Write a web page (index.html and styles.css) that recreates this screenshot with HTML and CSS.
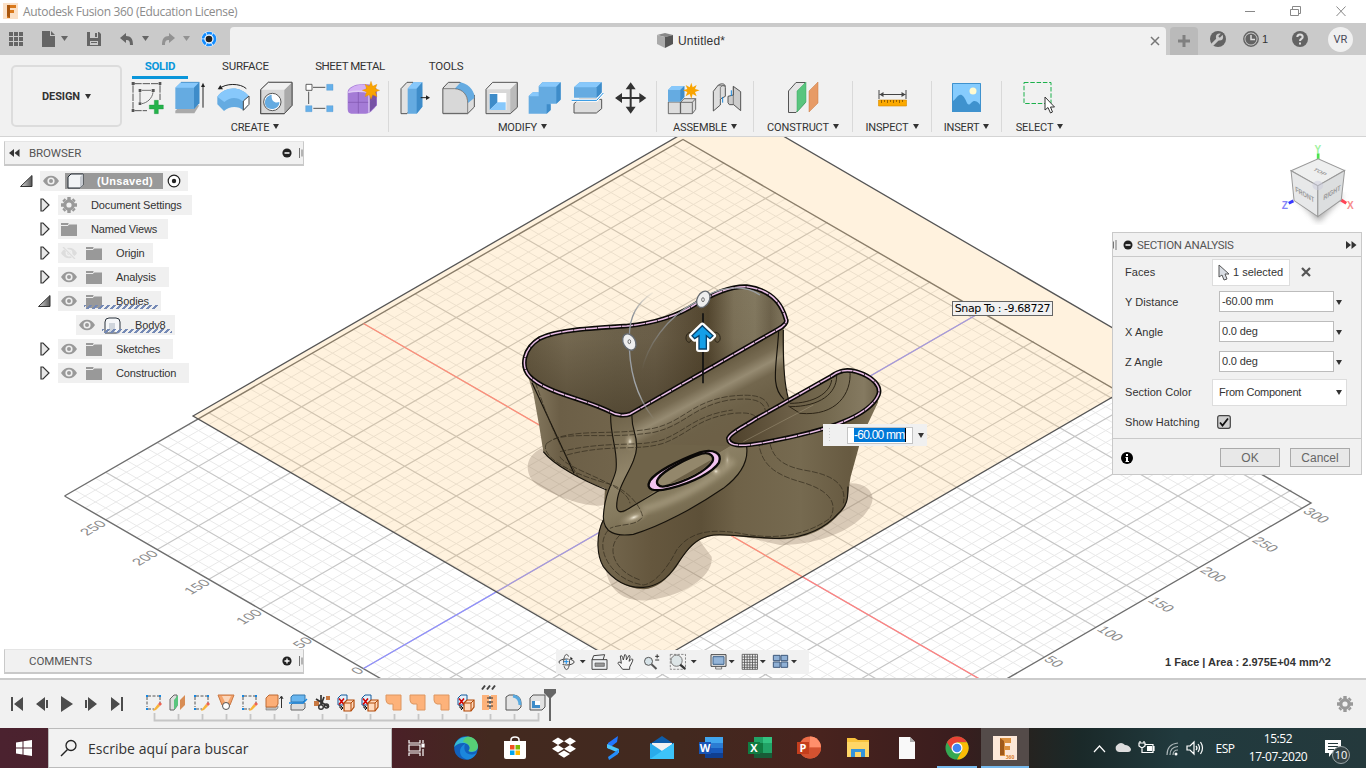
FILE: index.html
```html
<!DOCTYPE html>
<html lang="es">
<head>
<meta charset="utf-8">
<title>Autodesk Fusion 360</title>
<link rel="stylesheet" href="styles.css">
</head>
<body>
<svg class="defs" width="0" height="0">
  <defs>
    <symbol id="eye" viewBox="0 0 16 12"><path d="M0 6C4-1 12-1 16 6C12 13 4 13 0 6Z" fill="#999"/><circle cx="8" cy="6" r="3.6" fill="#f0f0f0"/><circle cx="8" cy="6" r="2" fill="#999"/></symbol>
    <symbol id="eyeoff" viewBox="0 0 16 12"><path d="M0 6C4-1 12-1 16 6C12 13 4 13 0 6Z" fill="#ddd"/><circle cx="8" cy="6" r="3.4" fill="#f0f0f0"/><circle cx="8" cy="6" r="2" fill="#ddd"/><path d="M3 0L14 12" stroke="#f0f0f0" stroke-width="3"/><path d="M2 0L14 12" stroke="#ddd" stroke-width="1.3"/></symbol>
    <symbol id="folder" viewBox="0 0 16 13"><path d="M0 0H7L8 1H16V13H0Z" fill="#999"/><path d="M0 2.5H7L8 1H16" stroke="#eee" fill="none"/></symbol>
    <symbol id="gear" viewBox="-8 -8 16 16"><circle r="4.2" fill="none" stroke="#999" stroke-width="3.2"/><path d="M0-8V-5M0 8V5M-8 0H-5M8 0H5M-5.5-5.5L-4-4M5.5 5.5L4 4M5.5-5.5L4-4M-5.5 5.5L-4 4" stroke="#999" stroke-width="3.4"/></symbol>
    <symbol id="closed" viewBox="0 0 10 14"><path d="M1 1H3L9 7L3 13H1Z" fill="#e8e8e8" stroke="#333" stroke-width="1.2"/></symbol>
    <symbol id="open" viewBox="0 0 13 12"><path d="M12 .5V11.500H.5Z" fill="url(#tri)" stroke="#333"/></symbol>
    <symbol id="tsketch" viewBox="0 0 18 18"><path d="M3 2H14M2 3V13M3 15H9M15 3V9" stroke="#555" stroke-dasharray="3 1.500"/><path d="M1 1H3V3H1ZM14 1H16V3H14ZM1 14H3V16H1Z" fill="#1787e0"/><path d="M9 15L13 10L15 12L11 16L8 17Z" fill="#f8b43a"/><path d="M13 10L15 8L17 10L15 12Z" fill="#ee6352"/></symbol>
    <symbol id="tcopy" viewBox="0 0 18 18"><path d="M1 4L4 1H10V8L7 11H1Z" fill="#e3f0fb" stroke="#145a9c"/><path d="M2 4.500L7 10.500M7 4.500L2 10.500" stroke="#d20000" stroke-width="1.600"/><path d="M7 9L10 6H17V13L14 17H7Z" fill="#ffd9bd" stroke="#b24b0a" stroke-width="1.200"/><path d="M7 9H14V17M14 9L17 6" stroke="#b24b0a" fill="none"/><path d="M3 11V14H6M4 12L6 14L4 16" stroke="#111" fill="none"/></symbol>
    <symbol id="tpatch" viewBox="0 0 18 18"><path d="M1 1H16V16H8V10H4Q1 9 1 6Z" fill="#fdb27a" stroke="#dd9660"/></symbol>
    <symbol id="tconstruct" viewBox="0 0 18 18"><path d="M1 5L5 1H8V12L5 16H1Z" fill="#ddd" stroke="#666"/><path d="M5 6L9 1V11L5 16Z" fill="#59c57e"/><path d="M11 6L16 1V11L11 16Z" fill="#d88d55"/></symbol>
    <linearGradient id="tri"><stop stop-color="#ddd"/><stop offset="1" stop-color="#555"/></linearGradient>
    <linearGradient id="cupin" x1="0" y1="0" x2="1" y2="0"><stop stop-color="#665a42"/><stop offset=".16" stop-color="#776b53"/><stop offset=".35" stop-color="#6e634c"/><stop offset=".5" stop-color="#6c604a"/><stop offset=".7" stop-color="#53462f"/><stop offset=".8" stop-color="#7d7259"/><stop offset=".88" stop-color="#837960"/><stop offset=".94" stop-color="#6e634c"/><stop offset="1" stop-color="#857b62"/></linearGradient>
    <linearGradient id="cupshade" x1="0" y1="0" x2="0" y2="1"><stop stop-color="#3a2f1c" stop-opacity="0"/><stop offset=".4" stop-color="#3a2f1c" stop-opacity=".05"/><stop offset="1" stop-color="#3a2f1c" stop-opacity=".5"/></linearGradient>
    <linearGradient id="wall" x1="0" y1="0" x2="1" y2="0"><stop stop-color="#8c8066"/><stop offset=".1" stop-color="#6c5f47"/><stop offset=".25" stop-color="#71644b"/><stop offset=".36" stop-color="#65573e"/><stop offset=".5" stop-color="#5d5038"/><stop offset=".6" stop-color="#6f6248"/><stop offset=".78" stop-color="#766a50"/><stop offset=".92" stop-color="#675a41"/><stop offset="1" stop-color="#7f7358"/></linearGradient>
    <linearGradient id="deck" gradientUnits="userSpaceOnUse" x1="560" y1="310" x2="650" y2="480"><stop stop-color="#64583f"/><stop offset=".22" stop-color="#776b52"/><stop offset=".38" stop-color="#968b72"/><stop offset=".55" stop-color="#73674e"/><stop offset=".8" stop-color="#6d6148"/><stop offset="1" stop-color="#6d6047"/></linearGradient>
    <linearGradient id="ledge" x1="0" y1="0" x2=".5" y2="1"><stop stop-color="#6c6047"/><stop offset=".45" stop-color="#91856a"/><stop offset=".7" stop-color="#857a5e"/><stop offset="1" stop-color="#6c6046"/></linearGradient>
    <radialGradient id="glow"><stop stop-color="#f1ead8"/><stop offset=".3" stop-color="#b9ad92" stop-opacity=".7"/><stop offset="1" stop-color="#8a7d62" stop-opacity="0"/></radialGradient>
    <linearGradient id="cup2" x1="0" y1="0" x2="1" y2="0"><stop stop-color="#4e412b"/><stop offset=".4" stop-color="#6b5e46"/><stop offset=".65" stop-color="#74694f"/><stop offset=".9" stop-color="#857a61"/><stop offset="1" stop-color="#6e634b"/></linearGradient>
    <linearGradient id="arc1" gradientUnits="userSpaceOnUse" x1="0" y1="60" x2="0" y2="450"><stop stop-color="#8b9198" stop-opacity="0"/><stop offset=".2" stop-color="#8b9198"/><stop offset=".8" stop-color="#a4a8ac"/><stop offset="1" stop-color="#a4a8ac" stop-opacity="0"/></linearGradient>
    <linearGradient id="arc2" gradientUnits="userSpaceOnUse" x1="395" y1="300" x2="520" y2="120"><stop stop-color="#8b9198" stop-opacity="0"/><stop offset="1" stop-color="#9a9fa4"/></linearGradient>
    <filter id="soft3"><feGaussianBlur stdDeviation="8"/></filter>
  </defs>
</svg>

<header class="titlebar">
  <svg width="17" height="17" viewBox="0 0 17 17"><rect x="1" width="15" height="16" fill="#fbe0c6"/><path d="M5 2H14V5H8V7H12V10H8V15H5Z" fill="#d9791d"/><path d="M5 2H8V15L5 13Z" fill="#a9560d"/></svg>
  <span class="apptitle">Autodesk Fusion 360 (Education License)</span>
  <svg class="winbtns" width="120" height="22" viewBox="1240 0 120 22" fill="none" stroke="#888"><path d="M1245 10.500H1255M1290.500 8.500H1298.500V14.500H1290.500ZM1292.500 8V5.500H1300.500V12.500H1299M1336.500 5.500L1345.500 15M1345.500 5.500L1336.500 15"/></svg>
</header>

<div class="tabbar">
  <svg class="quick" width="230" height="32" viewBox="0 23 230 32">
    <path d="M9 32h4v4h-4zM14 32h4v4h-4zM19 32h4v4h-4zM9 37h4v4h-4zM14 37h4v4h-4zM19 37h4v4h-4zM9 42h4v4h-4zM14 42h4v4h-4zM19 42h4v4h-4z" fill="#656565"/>
    <path d="M42 31H50V36H55V47H42ZM51 31L55 35H51Z" fill="#656565"/><path d="M61 36H68L64.500 41Z" fill="#656565"/>
    <path d="M87 32H99L101 34V46H87Z" fill="#656565"/><path d="M90 32H98V38H90ZM90 41H98V45H90Z" fill="#cacaca"/><path d="M95 33H97V37H95ZM91 42H97V43H91Z" fill="#656565"/>
    <path d="M120 38L126 33V36C131 36 133 39 133 45H130C130 41 129 40 126 40V43Z" fill="#656565"/><path d="M142 36H149L145.500 41Z" fill="#656565"/>
    <path d="M175 38L169 33V36C164 36 162 39 162 45H165C165 41 166 40 169 40V43Z" fill="#929292"/><path d="M183 36H190L186.500 41Z" fill="#929292"/>
    <circle cx="209" cy="39" r="7.700" fill="#eaf5ff"/><circle cx="209" cy="39" r="6" fill="none" stroke="#138cff" stroke-width="2.600" stroke-dasharray="5.500 .8"/><circle cx="209" cy="39" r="3.300" fill="#222"/>
  </svg>
  <div class="doctab">
    <svg width="17" height="16" viewBox="0 0 17 16"><path d="M0 2L8 0L16 2L8 4Z" fill="#888"/><path d="M0 2L8 4V15L0 11Z" fill="#aaa"/><path d="M8 4L16 2V11L8 15Z" fill="#555"/></svg>
    <span>Untitled*</span>
    <svg class="tabx" width="10" height="10" viewBox="0 0 10 10"><path d="M1 1L9 9M9 1L1 9" stroke="#777" stroke-width="1.500"/></svg>
  </div>
  <div class="newtab"><svg width="14" height="14" viewBox="0 0 14 14"><path d="M7 1V13M1 7H13" stroke="#808080" stroke-width="3"/></svg></div>
  <svg width="56" height="32" viewBox="1204 23 56 32"><circle cx="1218" cy="39" r="8" fill="#636363"/><path d="M1213 44L1218 39" stroke="#cacaca" stroke-width="3" stroke-linecap="round"/><circle cx="1219.500" cy="37" r="3.600" fill="#cacaca"/><path d="M1219 37L1223 33" stroke="#636363" stroke-width="2.200"/><circle cx="1251" cy="39" r="7.200" fill="none" stroke="#636363" stroke-width="1.400"/><circle cx="1251" cy="39" r="5.600" fill="#636363"/><path d="M1251 35V39.500H1255" stroke="#ddd" stroke-width="1.500" fill="none"/></svg>
  <span class="jobs">1</span>
  <svg class="help" width="18" height="18" viewBox="0 0 18 18"><circle cx="9" cy="9" r="8" fill="#636363"/><path d="M6.300 7C6.300 3.500 11.700 3.500 11.700 7C11.700 9 9 8.800 9 11" fill="none" stroke="#ddd" stroke-width="2"/><path d="M8 12.500H10V14.500H8Z" fill="#ddd"/></svg>
  <span class="avatar">VR</span>
</div>

<section class="ribbon">
  <div class="workspace">DESIGN<i class="dn"></i></div>
  <div class="ribbonmain">
    <nav class="rtabs"><span class="on">SOLID</span><span>SURFACE</span><span>SHEET METAL</span><span>TOOLS</span></nav>
    <div class="groups">
      <div class="group create"><div class="icons">
        <svg viewBox="377 240 129 108"><path d="M402 251H478M398 256V326M402 332H440M479 256V300" stroke="#555" stroke-width="3" stroke-dasharray="22 3" fill="none"/><path d="M394 246h9v9h-9zM475 246h8v9h-8zM394 327h8v9h-8zM415 267h8v9h-8zM454 267h9v9h-9zM415 307h8v8h-8z" fill="#555"/><path d="M424 271H452M419 277V306M458 277C456 295 440 309 424 311" stroke="#555" stroke-width="2.500" fill="none"/><path d="M462 301H474V315H489V327H474V341H462V327H447V315H462Z" fill="#25b34b" stroke="#0d8a35"/></svg>
        <svg viewBox="506 240 129 108"><path d="M525 332L542 316H597L582 340H525Z" fill="#aaa"/><path d="M525 263L542 247H597V308L581 327H525Z" fill="#65abe1"/><path d="M525 263L542 247H597L581 263Z" fill="#87c8fb"/><path d="M581 263L597 247V310L581 327Z" fill="#3e8cc9"/><path d="M542 247H597" stroke="#2f7bb8" stroke-width="2"/><path d="M608 323V256" stroke="#222" stroke-width="3"/><path d="M602 261L608 248L614 261Z" fill="#222"/></svg>
        <svg viewBox="635 240 129 108"><path d="M656 267C675 249 720 249 738 266" fill="none" stroke="#222" stroke-width="3"/><path d="M652 268L660 255L668 268Z" fill="#222"/><path d="M651 290C675 258 720 258 746 289L746 314L729 331C714 317 688 317 671 333L651 313Z" fill="#65abe1"/><path d="M651 290C675 258 720 258 746 289L728 304C710 290 690 290 672 306Z" fill="#87c8fb"/><path d="M729 303L746 288V313L729 331Z" fill="#fff" stroke="#444" stroke-width="3"/></svg>
        <svg viewBox="764 240 129 108"><path d="M781 269L804 247H875V316L852 341H781Z" fill="#d8d8d8" stroke="#555" stroke-width="3"/><path d="M852 269L875 247V316L852 341Z" fill="#aaa"/><path d="M781 269L804 247H875L852 269Z" fill="#f0f0f0"/><path d="M781 269L804 247H875V316L852 341H781Z" fill="none" stroke="#555" stroke-width="3"/><circle cx="816" cy="306" r="26" fill="#fff" stroke="#555" stroke-width="3"/><path d="M814 284C812 305 825 310 837 306C838 330 805 333 796 318C790 300 798 288 814 284Z" fill="#65abe1"/></svg>
        <svg viewBox="887 240 129 108"><path d="M932 262H969M919 275V312M933 325H969" stroke="#555" stroke-width="3"/><path d="M911 253h18v18h-18z" fill="#fff" stroke="#444" stroke-width="2.500"/><path d="M973 253h19v18h-19zM910 317h19v18h-19zM973 317h19v18h-19z" fill="#65b0ea" stroke="#4b90c8"/></svg>
        <svg viewBox="1018 240 129 108"><path d="M1038 275C1040 262 1062 252 1080 253C1110 249 1127 264 1126 285V315C1114 330 1104 342 1090 341H1054C1038 341 1038 333 1038 320Z" fill="#a47bd6"/><path d="M1040 275C1045 260 1070 252 1098 254L1088 276C1070 272 1054 274 1040 278Z" fill="#d3b0f4"/><path d="M1102 274L1124 264V316L1102 338Z" fill="#7652a4"/><path d="M1039 307H1102L1126 290M1070 276V340" fill="none" stroke="#7d55ad" stroke-width="2"/><path d="M1040 277Q1070 270 1102 278V338" fill="none" stroke="#dfccf5" stroke-width="4"/><path d="M1108 244L1113 259L1126 253L1121 266L1134 271L1121 276L1126 290L1113 284L1108 298L1103 284L1090 290L1095 276L1082 271L1095 266L1090 253L1103 259Z" fill="#f9a400" stroke="#e38d00"/></svg>
      </div><span class="glabel">CREATE<i class="dn"></i></span></div>
      <div class="group modify"><div class="icons">
        <svg viewBox="13 180 129 108"><path d="M34 206L52 187H70V260L52 281H34Z" fill="#e2e2e2" stroke="#555" stroke-width="3"/><path d="M54 206L71 187H98V260L81 281H54Z" fill="#65abe1"/><path d="M54 206L71 187H98L81 206Z" fill="#87c8fb"/><path d="M81 206L98 187V260L81 281Z" fill="#3e8cc9"/><path d="M93 233H113" stroke="#222" stroke-width="3"/><path d="M109 226L121 233L109 240Z" fill="#222"/></svg>
        <svg viewBox="142 180 129 108"><path d="M160 204L176 187H211L254 225V261L234 281H160Z" fill="#ddd" stroke="#555" stroke-width="3"/><path d="M195 206L213 187C244 194 256 220 254 234L235 249C235 225 220 209 195 206Z" fill="#65abe1"/><path d="M160 206H195C221 208 234 226 234 249V280H160Z" fill="#d8d8d8" stroke="#555" stroke-width="2"/></svg>
        <svg viewBox="271 180 129 108"><path d="M289 208L309 187H383V262L362 281H289Z" fill="#d8d8d8"/><path d="M289 208L309 187H383L362 208Z" fill="#f0f0f0"/><path d="M362 208L383 187V262L362 281Z" fill="#bbb"/><path d="M289 208L309 187H383V262L362 281H289Z" fill="none" stroke="#555" stroke-width="3"/><path d="M300 219H350V270H300Z" fill="#fff"/><path d="M300 222L323 222V248L300 270Z" fill="#3e8cc9"/><path d="M300 270L323 247H348V270Z" fill="#87c8fb"/></svg>
        <svg viewBox="400 180 129 108"><path d="M417 228L430 217H447V199L458 187H513V238L500 251H483V270L471 281H417Z" fill="#65abe1"/><path d="M447 200L459 187H513L500 200ZM417 229L429 217H447V229Z" fill="#87c8fb"/><path d="M500 200L513 187V239L500 251ZM471 253H483V270L471 281Z" fill="#3e8cc9"/></svg>
        <svg viewBox="529 180 129 108"><path d="M553 251L568 238H636V266L620 279H553Z" fill="#ddd" stroke="#555" stroke-width="3"/><path d="M553 202L570 187H636V220L621 233H553Z" fill="#65abe1"/><path d="M553 202L570 187H636L621 202Z" fill="#87c8fb"/><path d="M621 202L636 187V220L621 233Z" fill="#3e8cc9"/><path d="M546 241H621L641 219" fill="none" stroke="#fff" stroke-width="8"/><path d="M546 241H621L641 219" fill="none" stroke="#188be0" stroke-width="3"/></svg>
        <svg viewBox="658 180 129 108"><path d="M723 205V263M694 234H752" stroke="#333" stroke-width="6"/><path d="M723 187L738 208H708ZM723 281L738 260H708ZM676 234L697 219V249ZM770 234L749 219V249Z" fill="#333"/></svg>
      </div><span class="glabel">MODIFY<i class="dn"></i></span></div>
      <div class="group assemble"><div class="icons">
        <svg viewBox="819 180 129 108"><path d="M838 246H874V281H838ZM875 247L885 236H920V268L910 281H875ZM875 247H910V280M910 247L920 236" fill="#ddd" stroke="#555" stroke-width="2.500"/><path d="M837 210L849 198H886V231L874 245H837Z" fill="#65abe1"/><path d="M837 210L849 198H886L874 210Z" fill="#87c8fb"/><path d="M874 210L886 198V231L874 245Z" fill="#3e8cc9"/><path d="M907 188L911 202L923 195L918 207L932 211L918 216L923 229L911 222L907 236L902 222L890 229L895 216L882 211L895 207L890 195L902 202Z" fill="#f9a400"/></svg>
        <svg viewBox="948 180 129 108"><path d="M973 214L988 195C1000 188 1010 192 1009 202V229L994 237V255L973 273Z" fill="#ddd" stroke="#555" stroke-width="3"/><path d="M994 235V202Q1002 192 1008 199M988 197L1008 197" fill="none" stroke="#555" stroke-width="2"/><path d="M1033 199L1055 215V272L1034 254H1021L1017 248V229L1033 225Z" fill="#ccc" stroke="#555" stroke-width="3"/><path d="M1033 199V254" stroke="#555" stroke-width="2"/><path d="M1001 231V248M1027 211V228" stroke="#1b86d9" stroke-width="3"/></svg>
      </div><span class="glabel">ASSEMBLE<i class="dn"></i></span></div>
      <div class="group construct"><div class="icons">
        <svg viewBox="783 80 43 36"><path d="M789.500 91L797 82.500H806V103L797 112.500H789.500Z" fill="#e5e5e5" stroke="#555"/><path d="M798 91L807 82V102L798 112Z" fill="#59c57e" stroke="#39a760" stroke-width=".5"/><path d="M810 91L819 82V103L810 112Z" fill="#e79b66" stroke="#c97a43" stroke-width=".5"/></svg>
      </div><span class="glabel">CONSTRUCT<i class="dn"></i></span></div>
      <div class="group inspect"><div class="icons">
        <svg viewBox="871.500 80 43 36"><path d="M879.500 90V99M906.500 90V99M880 94.500H906" stroke="#444"/><path d="M880 94.500L884 92V97ZM906 94.500L902 92V97Z" fill="#444"/><path d="M879 100H907V106H879Z" fill="#fba900" stroke="#d98c00" stroke-width=".6"/><path d="M882 100V103M885 100V102M888 100V103M891 100V102M894 100V103M897 100V102M900 100V103M903 100V102" stroke="#805000" stroke-width=".8"/></svg>
      </div><span class="glabel">INSPECT<i class="dn"></i></span></div>
      <div class="group insert"><div class="icons">
        <svg viewBox="945 80 43 36"><path d="M952 83H981V112H952Z" fill="#86ccfe"/><path d="M952 102C957 98 959 92 963 96C967 100 967 108 971 103C975 98 979 103 981 106V112H952Z" fill="#3f92ce"/><circle cx="973" cy="91" r="3.500" fill="#fffad0"/><path d="M952.500 83.500H980.500V111.500H952.500Z" fill="none" stroke="#3f92ce"/></svg>
      </div><span class="glabel">INSERT<i class="dn"></i></span></div>
      <div class="group select"><div class="icons">
        <svg viewBox="1017.500 80 43 36"><path d="M1023.500 82.500H1050.500V103.500H1023.500Z" fill="none" stroke="#1bb04b" stroke-dasharray="4.500 1.800"/><path d="M1044.500 97V110L1047.500 107.500L1050 113L1052 112L1050 107H1054Z" fill="#fff" stroke="#333"/></svg>
      </div><span class="glabel">SELECT<i class="dn"></i></span></div>
    </div>
  </div>
</section>

<main class="viewport">
  <svg class="scene" width="1366" height="541" viewBox="0 137 1366 541">
    <path id="minor" transform="matrix(10.31 5.95 10.31 -5.95 64.5 496)" class="minor"/>
    <path id="major" transform="matrix(10.31 5.95 10.31 -5.95 64.5 496)" class="major"/>
    <path d="M64.500 496L683 139.500L1311 503L1003 681M64.500 496L390 684" fill="none" stroke="#6e6e6e" stroke-width="1.400"/>
    <path d="M363.500 323.500L983 681" stroke="#ff8080" stroke-width="1.300"/>
    <path d="M363.500 668.500L975 315.500" stroke="#8e8eff" stroke-width="1.300"/>
    <path d="M193 416L731 105.600L1172 362.500L636.500 673Z" fill="rgba(255,190,90,.2)" stroke="#555" stroke-width="1.300"/>
    <g class="axis">
      <text transform="matrix(.87 -.5 .87 .5 87 536)">250</text><text transform="matrix(.87 -.5 .87 .5 139 566)">200</text><text transform="matrix(.87 -.5 .87 .5 191 595)">150</text><text transform="matrix(.87 -.5 .87 .5 243 625)">100</text><text transform="matrix(.87 -.5 .87 .5 300 649)">50</text><text transform="matrix(.87 -.5 .87 .5 358 675)">0</text>
      <text transform="matrix(.87 .5 -.87 .5 1302 512)">300</text><text transform="matrix(.87 .5 -.87 .5 1251 541)">250</text><text transform="matrix(.87 .5 -.87 .5 1199 571)">200</text><text transform="matrix(.87 .5 -.87 .5 1147 601)">150</text><text transform="matrix(.87 .5 -.87 .5 1096 630)">100</text><text transform="matrix(.87 .5 -.87 .5 1043 660)">50</text>
    </g>
    <g transform="translate(510 270) scale(.33333)">
      <g fill="#8a7766" opacity=".32"><path d="M95 535C40 560 40 620 90 650C150 685 240 715 285 705V650L190 600Z"/><path d="M285 880C290 960 340 1000 420 990C520 978 612 920 605 860L560 800Z"/><path d="M1022 640C1080 640 1100 680 1080 710C1050 770 940 825 810 825L700 800Z"/></g>
      <path d="M42 280L70 370L88 470L100 545C130 585 215 630 285 655L280 745C255 800 262 860 280 890C310 930 350 955 400 958C440 955 470 930 500 890C530 840 560 802 610 797C660 793 740 808 810 808C890 808 950 775 985 735C1020 705 1012 670 1022 620L1055 500L1105 395L1010 302L965 315L835 385C818 350 825 260 820 160L600 250Z" fill="url(#wall)"/>
      <path d="M302 435L340 440L820 170C818 260 822 340 835 386L745 480L745 520L710 532C715 590 650 650 560 700C460 755 410 790 350 797C300 795 278 780 280 745C285 680 330 600 318 560Z" fill="url(#deck)"/>
      <path d="M302 440C300 500 325 545 318 600C310 640 285 670 280 745C280 790 320 800 370 793C450 770 560 710 640 655C700 610 712 575 710 532L660 528L430 665L345 725C325 735 318 720 322 690C335 620 385 570 378 520C375 480 362 470 366 436Z" fill="url(#ledge)"/>
      <path d="M322 690C335 620 385 570 378 520L660 528L430 665L345 725C325 735 318 720 322 690Z" fill="#6f6349"/>
      <path d="M395 720C470 700 590 650 670 570" fill="none" stroke="#b0a589" stroke-width="24" opacity=".6" filter="url(#soft3)"/>
      <ellipse cx="372" cy="742" rx="55" ry="22" transform="rotate(-22 372 742)" fill="url(#glow)"/><ellipse cx="360" cy="515" rx="20" ry="32" fill="url(#glow)"/><ellipse cx="618" cy="604" rx="22" ry="20" fill="url(#glow)"/><ellipse cx="652" cy="570" rx="14" ry="38" fill="url(#glow)" opacity=".5"/>
      <path d="M302 435C300 500 325 540 318 600C310 640 285 660 280 740C280 790 320 800 370 793C450 770 560 710 640 655C700 610 715 570 710 530M366 436C364 480 380 485 380 530C378 590 320 640 320 710C322 735 345 724 365 710L450 660" fill="none" stroke="#16120b" stroke-width="3.400"/>
      <path d="M66 338L192 610M100 545C130 585 215 630 290 660M280 750C255 800 262 860 280 890C310 930 350 955 400 952C440 950 470 930 500 885C530 840 555 802 610 795C660 790 740 806 810 805C890 804 950 770 985 730C1020 700 1012 670 1014 650M806 184C800 290 780 350 822 388M820 180C818 300 825 350 835 385" fill="none" stroke="#16120b" stroke-width="3.400"/>
      <path d="M76 338C110 430 130 500 205 620M110 520C180 470 300 500 430 475C520 455 540 400 650 380C740 368 780 380 778 430M170 555C300 520 380 545 460 520C540 490 560 445 670 430C730 425 750 435 745 480C740 570 780 610 870 635C960 660 985 700 960 745M778 430C770 530 780 580 880 600C980 615 1010 650 1000 700M110 520C90 550 150 600 290 640C340 650 390 700 398 740C380 770 330 760 300 775M295 780C250 830 300 930 400 945C440 940 480 880 500 840C540 785 600 775 690 790C800 812 890 795 960 745M330 795C290 830 305 900 390 930M150 560C170 600 350 640 360 700M130 508C190 485 300 508 432 487C526 465 546 412 652 391C730 380 768 392 766 430M150 545C300 510 380 533 456 510C530 482 556 435 668 420" fill="none" stroke="#332b1d" stroke-width="2.600" stroke-dasharray="18 5" opacity=".8"/>
      <path d="M340 435L800 180C825 168 832 155 828 148C815 100 785 60 710 50C660 48 610 72 560 100C500 140 430 160 350 168C250 174 140 180 90 205C40 235 30 290 60 320C110 370 220 385 300 425C320 435 340 437 360 432" fill="url(#cupin)"/>
      <path d="M340 435L800 180C825 168 832 155 828 148C815 100 785 60 710 50C660 48 610 72 560 100C500 140 430 160 350 168C250 174 140 180 90 205C40 235 30 290 60 320C110 370 220 385 300 425C320 435 340 437 360 432" fill="url(#cupshade)"/>
      <path d="M655 505C660 490 700 470 740 445L965 318C990 300 1010 298 1040 305C1090 320 1115 350 1105 375C1095 400 1060 430 1000 455C930 485 830 505 750 520C690 530 655 528 655 505Z" fill="url(#cup2)"/>
      <path d="M980 318C980 370 930 410 840 410M1020 304C1025 370 980 440 870 430M965 330C960 370 910 400 840 400M870 430L835 408" fill="none" stroke="#2c2416" stroke-width="3"/><path d="M700 515L910 405" stroke="#a79b80" stroke-width="2" opacity=".7"/>
      <g class="rim"><path d="M360 432L800 180C825 168 832 155 828 148C815 100 785 60 710 50C660 48 610 72 560 100C500 140 430 160 350 168C250 174 140 180 90 205C40 235 30 290 60 320C110 370 220 385 300 425C320 437 345 438 360 432Z"/><path d="M655 505C660 490 700 470 740 445L965 318C990 300 1010 298 1040 305C1090 320 1115 350 1105 375C1095 400 1060 430 1000 455C930 485 830 505 750 520C690 530 655 528 655 505Z"/></g>
      <g class="rimpink"><path d="M360 432L800 180C825 168 832 155 828 148C815 100 785 60 710 50C660 48 610 72 560 100C500 140 430 160 350 168C250 174 140 180 90 205C40 235 30 290 60 320C110 370 220 385 300 425C320 437 345 438 360 432Z"/><path d="M655 505C660 490 700 470 740 445L965 318C990 300 1010 298 1040 305C1090 320 1115 350 1105 375C1095 400 1060 430 1000 455C930 485 830 505 750 520C690 530 655 528 655 505Z"/></g>
      <path d="M420 632C436 607 500 573 570 547C610 535 638 550 627 578C610 605 550 638 480 655C430 667 405 660 420 632Z" fill="#f3c4f0" stroke="#0b0907" stroke-width="7"/>
      <path d="M445 625C460 602 530 565 575 551C602 545 614 560 607 575C590 602 530 634 470 648C445 655 435 640 445 625Z" fill="#93876b" stroke="#0b0907" stroke-width="7"/>
      <path d="M475 642L603 570C592 598 530 630 475 642Z" fill="#6b5f46"/>
      <path d="M428 68C380 100 358 140 358 200C355 300 380 380 430 445" fill="none" stroke="url(#arc1)" stroke-width="4"/><path d="M395 305C410 230 470 140 560 95C620 50 700 40 750 75" fill="none" stroke="url(#arc2)" stroke-width="4"/>
      <path d="M579 130V340" stroke="#111" stroke-width="5"/>
      <path d="M545 187C525 185 523 215 537 217C548 215 543 200 543 200M613 187C633 185 636 215 622 217C611 215 616 200 616 200" fill="none" stroke="#2b2417" stroke-width="3"/>
      <g fill="#eee" stroke="#656a70" stroke-width="4"><ellipse cx="580" cy="88" rx="18" ry="26" transform="rotate(28 580 88)"/><ellipse cx="358" cy="216" rx="18" ry="26" transform="rotate(-28 358 216)"/></g><g fill="none" stroke="#333" stroke-width="2"><ellipse cx="579" cy="89" rx="4" ry="6"/><ellipse cx="358" cy="215" rx="4" ry="6"/></g>
      <path d="M577 167L609 197L600 206L589 197V237H567V197L554 206L546 197Z" fill="#fff" stroke="#fff" stroke-width="18" stroke-linejoin="round"/><path d="M577 167L609 197L600 206L589 197V237H567V197L554 206L546 197Z" fill="#149fe8" stroke="#073f68" stroke-width="4"/>
    </g>
  </svg>

  <section class="panelhead browser"><svg width="12" height="8" viewBox="0 0 12 8"><path d="M0 4L5 0V8ZM5.500 4L10.500 0V8Z" fill="#333"/></svg><span>BROWSER</span><svg class="end" width="21" height="12" viewBox="0 0 21 12"><circle cx="5" cy="6" r="4.600" fill="#222"/><path d="M2.500 6H7.500" stroke="#fff" stroke-width="1.500"/><path d="M17.500 1V11M20 2.500V9.500" stroke="#777"/></svg></section>

  <ul class="tree">
    <li class="root"><svg width="13" height="12"><use href="#open"/></svg><div class="node w148"><svg width="16" height="12"><use href="#eye"/></svg><b class="sel"><svg width="17" height="16" viewBox="0 0 17 16"><path d="M1 4L4 1H16V12L13 15H1Z" fill="#f1f3f5" stroke="#222b33"/><path d="M13 4L16 1V12L13 15Z" fill="#c5c9cf"/></svg><em>(Unsaved)</em></b><svg width="14" height="14" viewBox="0 0 14 14"><circle cx="7" cy="7" r="5.800" fill="#fff" stroke="#222" stroke-width="1.200"/><circle cx="7" cy="7" r="2.200" fill="#222"/></svg></div></li>
    <li><svg width="10" height="14"><use href="#closed"/></svg><div class="node w134"><svg width="16" height="16"><use href="#gear"/></svg><em class="s">Document Settings</em></div></li>
    <li><svg width="10" height="14"><use href="#closed"/></svg><div class="node w110"><svg width="16" height="13"><use href="#folder"/></svg><em class="s">Named Views</em></div></li>
    <li><svg width="10" height="14"><use href="#closed"/></svg><div class="node w95"><svg width="16" height="12"><use href="#eyeoff"/></svg><svg width="16" height="13"><use href="#folder"/></svg><em>Origin</em></div></li>
    <li><svg width="10" height="14"><use href="#closed"/></svg><div class="node w111"><svg width="16" height="12"><use href="#eye"/></svg><svg width="16" height="13"><use href="#folder"/></svg><em>Analysis</em></div></li>
    <li class="opened"><svg width="13" height="12"><use href="#open"/></svg><div class="node w103 hatch"><svg width="16" height="12"><use href="#eye"/></svg><svg width="16" height="13"><use href="#folder"/></svg><em>Bodies</em></div></li>
    <li class="leaf"><div class="node w99 hatch"><svg width="16" height="12"><use href="#eye"/></svg><svg width="17" height="17" viewBox="0 0 17 17"><path d="M1 5Q1 1 5 1H12Q16 1 16 5V14Q16 16 12 16H1Z" fill="#f5f7f9" stroke="#2b333c"/><path d="M5 6H11V15H5Z" fill="#cfd5dc"/></svg><em>Body8</em></div></li>
    <li><svg width="10" height="14"><use href="#closed"/></svg><div class="node w115"><svg width="16" height="12"><use href="#eye"/></svg><svg width="16" height="13"><use href="#folder"/></svg><em>Sketches</em></div></li>
    <li><svg width="10" height="14"><use href="#closed"/></svg><div class="node w131"><svg width="16" height="12"><use href="#eye"/></svg><svg width="16" height="13"><use href="#folder"/></svg><em>Construction</em></div></li>
  </ul>

  <section class="panelhead comments"><span>COMMENTS</span><svg class="end" width="21" height="12" viewBox="0 0 21 12"><circle cx="5" cy="6" r="4.600" fill="#222"/><path d="M2.500 6H7.500M5 3.500V8.500" stroke="#fff" stroke-width="1.300"/><path d="M17.500 1V11M20 2.500V9.500" stroke="#777"/></svg></section>

  <svg class="cube" width="77" height="87" viewBox="540 20 230 260">
    <defs><filter id="soft"><feGaussianBlur stdDeviation="9"/></filter></defs>
    <path d="M585 180L655 260L730 180Z" fill="#777" opacity=".6" filter="url(#soft)"/>
    <path d="M654 54V75" stroke="#4de44d" stroke-width="8"/><path d="M580 196L566 203" stroke="#3838ff" stroke-width="9"/><path d="M722 193L738 203" stroke="#f45" stroke-width="9"/>
    <path d="M573 106L654 70L733 105L653 151Z" fill="#eeefef" stroke="#999" stroke-width="3"/><path d="M573 106L653 151V243L582 195Z" fill="#e7e8e9" stroke="#999" stroke-width="3"/><path d="M733 105L653 151V243L723 193Z" fill="#dcdedf" stroke="#999" stroke-width="3"/>
    <ellipse cx="653" cy="150" rx="16" ry="14" fill="#ccd" opacity=".5"/>
    <g font-family="Liberation Sans" font-weight="bold" fill="#999"><text transform="matrix(.75 .36 -.6 .4 637 104)" font-size="23">TOP</text><text transform="matrix(.72 .42 .08 1 586 168)" font-size="23">FRONT</text><text transform="matrix(.72 -.45 -.08 1 669 195)" font-size="23">RIGHT</text></g>
    <g font-family="Liberation Sans" font-weight="bold" font-size="30"><text x="643" y="52" fill="#a0f2a0">Y</text><text x="545" y="219" fill="#8484f8">Z</text><text x="740" y="219" fill="#f78c8c">X</text></g>
  </svg>

  <div class="snap">Snap To : -9.68727</div>
  <div class="floatinput"><i class="grip"></i><div class="fbox"><mark>-60.00 mm</mark></div><i class="dn"></i></div>

  <section class="dialog">
    <div class="dhead"><svg width="20" height="12" viewBox="0 0 20 12"><path d="M.5 2.500V9.500M3 1V11" stroke="#777"/><circle cx="15" cy="6" r="4.500" fill="#222"/><path d="M12.500 6H17.500" stroke="#fff" stroke-width="1.500"/></svg><span>SECTION ANALYSIS</span><svg class="end" width="11" height="8" viewBox="0 0 11 8"><path d="M0 0L5 4L0 8ZM5.500 0L10.500 4L5.500 8Z" fill="#333"/></svg></div>
    <div class="drow"><label>Faces</label><div class="pick"><svg width="12" height="17" viewBox="0 0 12 17"><path d="M1 1V13L4 11L6 16L9 15L7 10H11Z" fill="#d9dde3" stroke="#555"/></svg>1 selected</div><svg class="clr" width="10" height="10" viewBox="0 0 10 10"><path d="M1 1L9 9M9 1L1 9" stroke="#555" stroke-width="2.200"/></svg></div>
    <div class="drow"><label>Y Distance</label><div class="inp">-60.00 mm</div><i class="dn"></i></div>
    <div class="drow"><label>X Angle</label><div class="inp">0.0 deg</div><i class="dn"></i></div>
    <div class="drow"><label>Z Angle</label><div class="inp">0.0 deg</div><i class="dn"></i></div>
    <div class="drow"><label>Section Color</label><div class="combo">From Component<i class="dn"></i></div></div>
    <div class="drow"><label>Show Hatching</label><svg class="chk" width="14" height="14" viewBox="0 0 14 14"><rect x=".7" y=".7" width="12.600" height="12.600" rx="2" fill="#cfcfcf" stroke="#444" stroke-width="1.200"/><path d="M3 7.500L5.500 10.500L11 3.500" fill="none" stroke="#111" stroke-width="1.800"/></svg></div>
    <div class="dfoot"><svg width="12" height="12" viewBox="0 0 12 12"><circle cx="6" cy="6" r="6"/><path d="M5 2H7V4H5ZM4.500 5H7V9H8V10H4.500V9H5V6H4.500Z" fill="#fff"/></svg><button>OK</button><button>Cancel</button></div>
  </section>

  <div class="navbar">
    <svg width="32" height="24" viewBox="48 30 97 72" fill="none"><ellipse cx="80" cy="66" rx="23" ry="9" stroke="#444" stroke-width="3" stroke-dasharray="38 8"/><ellipse cx="80" cy="66" rx="9" ry="23" stroke="#555" stroke-width="3" stroke-dasharray="40 8"/><path d="M79 58V72M72 65H86" stroke="#178be5" stroke-width="3"/><path d="M92 50L99 56L91 60Z" fill="#222"/><path d="M120 60H138L129 70Z" fill="#333"/></svg>
    <svg width="25" height="24" viewBox="145 30 75 72"><path d="M157 60L162 47L195 44L190 60M157 59H202V88H157Z" fill="#eef0f2" stroke="#444" stroke-width="3"/><path d="M166 69H194V79H166Z" fill="#999" stroke="#555" stroke-width="2"/></svg>
    <svg width="25" height="24" viewBox="220 30 75 72"><path d="M249 88L235 70Q236 62 245 70L242 48Q247 42 251 60L255 44Q261 42 260 60L268 46Q274 46 268 64L276 57Q283 56 276 69L270 81V88Z" fill="#f7f7f7" stroke="#444" stroke-width="3"/></svg>
    <svg width="27" height="24" viewBox="295 30 80 72"><circle cx="326" cy="64" r="12" fill="#d7e3e8" stroke="#555" stroke-width="3"/><path d="M335 73L350 87" stroke="#555" stroke-width="6"/><path d="M352 43V55M346 49H358M346 60H358" stroke="#333" stroke-width="3"/></svg>
    <svg width="38" height="24" viewBox="375 30 115 72"><path d="M391 43H437V88H391Z" fill="none" stroke="#555" stroke-width="2" stroke-dasharray="7 4"/><circle cx="410" cy="62" r="17" fill="#dde5e7" stroke="#777" stroke-width="3"/><path d="M421 74L436 87" stroke="#333" stroke-width="7"/><path d="M453 60H471L462 70Z" fill="#333"/></svg>
    <svg width="35" height="24" viewBox="490 30 105 72"><path d="M514 44H559V79H514Z" fill="#eee" stroke="#444" stroke-width="3"/><path d="M520 50H553V73H520Z" fill="#93b4d8" stroke="#40648b" stroke-width="3"/><path d="M528 80H546V87H528Z" fill="#eee" stroke="#444" stroke-width="2"/><path d="M567 60H585L576 70Z" fill="#333"/></svg>
    <svg width="31" height="24" viewBox="595 30 92 72"><path d="M607 43H653V88H607ZM614 43V88M622 43V88M630 43V88M638 43V88M646 43V88M607 51H653M607 59H653M607 67H653M607 75H653M607 82H653" fill="#eee" stroke="#555" stroke-width="2.500"/><path d="M660 60H678L669 70Z" fill="#333"/></svg>
    <svg width="40" height="24" viewBox="687 30 120 72"><path d="M700 46H720V62H700ZM723 46H743V62H723ZM700 66H720V82H700ZM723 66H743V82H723Z" fill="#8fb0d5" stroke="#3e587b" stroke-width="3"/><path d="M753 60H771L762 70Z" fill="#333"/></svg>
  </div>
  <div class="status">1 Face | Area : 2.975E+04 mm^2</div>
</main>

<section class="timeline">
  <svg class="play" width="142" height="48" viewBox="0 680 142 48" fill="#4c4c4c"><path d="M11 697H13V711H11ZM23 697V711L14 704ZM36 704L45 697V711ZM46 700H48V708H46ZM61 696L73 704L61 712ZM85 700H87V708H85ZM88 697V711L97 704ZM111 697V711L120 704ZM121 697H123V711H121Z"/></svg>
  <div class="feats"><div class="ftrow">
    <svg><use href="#tsketch"/></svg><svg><use href="#tconstruct"/></svg><svg><use href="#tsketch"/></svg>
    <svg viewBox="0 0 18 18"><path d="M1 1H17L13 11H5Z" fill="#f5a46d" stroke="#c97844"/><path d="M5 2H14L11 8H8Z" fill="#fbd6bb"/><circle cx="9" cy="12" r="3.500" fill="#fff" stroke="#555"/></svg>
    <svg><use href="#tsketch"/></svg>
    <svg viewBox="0 0 18 18"><path d="M1 13L3 12H13V14L11 16H1Z" fill="#bbb" stroke="#777" stroke-width=".6"/><path d="M1 4L4 1H13V10L11 13H1Z" fill="#fcae77" stroke="#bd6b35"/><path d="M16.500 14V3M14.500 5L16.500 2L18 5" stroke="#333" fill="none"/></svg>
    <svg viewBox="0 0 18 18"><path d="M2 11L4 9H16V14L14 16H2Z" fill="#ddd" stroke="#666"/><path d="M2 3L4 1H16V6L14 8H2Z" fill="#69b6ef" stroke="#3479ae"/><path d="M0 9H14L18 5" fill="none" stroke="#1787e0" stroke-width="1.400"/></svg>
    <svg viewBox="0 0 18 18"><path d="M1 7H6V12H1ZM13 2H17V6H13Z" fill="#c97942"/><path d="M3 5L16 13M8 1V10M11 3L8 11" stroke="#333" stroke-width="1.700"/><circle cx="8" cy="13" r="2.300" fill="none" stroke="#333" stroke-width="1.400"/><circle cx="13.500" cy="12" r="2" fill="none" stroke="#333" stroke-width="1.400"/></svg>
    <svg><use href="#tcopy"/></svg><svg><use href="#tcopy"/></svg><svg><use href="#tpatch"/></svg><svg><use href="#tpatch"/></svg><svg><use href="#tpatch"/></svg><svg><use href="#tcopy"/></svg>
    <svg viewBox="0 0 18 18"><path d="M1 1H8V16H1ZM10 1H16V16H10Z" fill="#fdb27a"/><path d="M6 4H12M6 8H12M6 12H12M9 2V5M9 7V10M9 12V15" stroke="#333"/><path d="M1-4.500L4-8.500M6-4.500L9-8.500M11-4.500L14-8.500" stroke="#444" stroke-width="2"/></svg>
    <svg viewBox="0 0 18 18"><path d="M1 3L4 1H9Q16 2 16 9V13L13 16H1Z" fill="#e4e4e4" stroke="#555"/><path d="M8 2Q15 3 15 11" fill="none" stroke="#59a9df" stroke-width="3"/></svg>
    <svg viewBox="0 0 18 18"><path d="M1 4L4 1H16V13L13 16H1Z" fill="#e2e2e2" stroke="#555"/><path d="M3 7H11V14H3Z" fill="#3e8cc9"/><path d="M6 7H11V11H6Z" fill="#fff"/></svg>
  </div>
  <svg class="bracket" width="420" height="10" viewBox="142 712 420 10"><path d="M154.500 713V720.500H538.500V713M178.500 714V720M202.500 714V720M226.500 714V720M250.500 714V720M274.500 714V720M298.500 714V720M322.500 714V720M346.500 714V720M370.500 714V720M394.500 714V720M418.500 714V720M442.500 714V720M466.500 714V720M490.500 714V720M514.500 714V720" fill="none" stroke="#c6c6c6" stroke-width="1.800"/></svg></div>
  <svg class="marker" width="14" height="34" viewBox="0 0 14 34"><path d="M1 1H13V5L8 10V33H6V10L1 5Z" fill="#666"/></svg>
  <svg class="cog" width="16" height="16"><use href="#gear"/></svg>
</section>

<footer class="taskbar">
  <div class="start"><svg width="16" height="16" viewBox="0 0 16 16"><path d="M0 2.500L6.500 1.500V7.500H0ZM7.500 1.300L16 0V7.500H7.500ZM0 8.500H6.500V14.500L0 13.500ZM7.500 8.500H16V16L7.500 14.700Z" fill="#fff"/></svg></div>
  <div class="search"><svg width="18" height="18" viewBox="0 0 18 18"><circle cx="11" cy="6.500" r="5" fill="none" stroke="#222" stroke-width="1.300"/><path d="M7.500 10.500L1 17" stroke="#222" stroke-width="1.500"/></svg><span>Escribe aquí para buscar</span></div>
  <div class="apps">
    <div><svg viewBox="0 0 26 26" fill="none" stroke="#fff" stroke-width="1.200"><path d="M5 5V8H16V5M5 21V18H16V21M5 10H16V16H5ZM19 5V8M19 14V21"/><path d="M18 9h2v3h-2z" fill="#fff"/></svg></div>
    <div><svg class="edge" viewBox="0 0 26 26"><circle cx="13" cy="13" r="11.800" fill="#1261bd"/><path d="M1.200 12C3 0 22-3 25 11C25 17 19 18 15.500 16C19 12 15 8 10 8C6 8 3 10 1.200 12Z" fill="#36bbd0"/><path d="M15 1.500C22 2 26 8 24.500 13C23 17 18 17 15.500 16C19 12 15 8 10 7C11 5 11 3 15 1.500Z" fill="#57ce75"/><path d="M12 9C5 12 5 23 15 24.600C19 24 22 21 23.500 18C17 22 9 18 12 9Z" fill="#1b87dc"/></svg></div>
    <div><svg viewBox="0 0 26 26"><path d="M9 7V5Q9 2 13 2Q17 2 17 5V7" fill="none" stroke="#fff" stroke-width="1.500"/><path d="M2 6H24V22Q24 24 22 24H4Q2 24 2 22Z" fill="#fff"/><path d="M8 10H12.500V14.500H8Z" fill="#f25022"/><path d="M13.500 10H18V14.500H13.500Z" fill="#7fba00"/><path d="M8 15.500H12.500V20H8Z" fill="#00a4ef"/><path d="M13.500 15.500H18V20H13.500Z" fill="#ffb900"/></svg></div>
    <div><svg viewBox="0 0 26 26" fill="#fff"><path d="M7 2.500L13 6.300L7 10L1 6.300ZM19 2.500L25 6.300L19 10L13 6.300ZM7 10L13 13.700L7 17.500L1 13.700ZM19 10L25 13.700L19 17.500L13 13.700ZM13 15.500L19 19L13 22.700L7 19Z"/></svg></div>
    <div><svg viewBox="0 0 26 26"><path d="M18 1L8 8V14L17 7Z" fill="#2176ff"/><path d="M7 9L19 14V18L7 13Z" fill="#4bc5f7"/><path d="M19 14L8 22L9 25L18 19Z" fill="#258dfa"/></svg></div>
    <div><svg viewBox="0 0 26 26"><path d="M1 9L13 1L25 9V15H1Z" fill="#0d5daa"/><path d="M3 8H23V18H3Z" fill="#f2f2f2"/><path d="M1 8L13 16L25 8V24H1Z" fill="#29abeb"/><path d="M1 24L13 16L25 8V24Z" fill="#3dc4fa"/></svg></div>
    <div><svg viewBox="0 0 26 26"><path d="M7 2H25V8H7Z" fill="#41a5ee"/><path d="M7 8H25V13H7Z" fill="#2b7cd3"/><path d="M7 13H25V18H7Z" fill="#185abd"/><path d="M7 18H25V23H7Z" fill="#103f91"/><path d="M1 7H13V19H1Z" fill="#1955b5"/><text x="7" y="17">W</text></svg></div>
    <div><svg viewBox="0 0 26 26"><path d="M7 2H25V23H7Z" fill="#21a366"/><path d="M16 2H25V8H16Z" fill="#33c481"/><path d="M7 8H16V18H7Z" fill="#107c41"/><path d="M7 18H25V23H7Z" fill="#185c37"/><path d="M1 7H13V19H1Z" fill="#107c41"/><text x="7" y="17">X</text></svg></div>
    <div><svg viewBox="0 0 26 26"><circle cx="14" cy="12.500" r="11" fill="#ed6c47"/><path d="M14 1.500A11 11 0 0 1 25 12.500H14Z" fill="#ff8f6b"/><path d="M3 12.500H25A11 11 0 0 1 3 12.500Z" fill="#d35230"/><path d="M1 7H13V19H1Z" fill="#c43e1c"/><text x="7" y="17">P</text></svg></div>
    <div><svg viewBox="0 0 26 26"><path d="M2 3H10L13 5H24V22H2Z" fill="#f9c23c"/><path d="M2 7H24V22H2Z" fill="#ffd667"/><path d="M6 22V14H20V22H16V17H10V22Z" fill="#3594db"/></svg></div>
    <div><svg viewBox="0 0 26 26"><path d="M5 2H16L21 7V24H5Z" fill="#f9f9f9"/><path d="M16 2V7H21Z" fill="#aaa"/></svg></div>
    <div class="run"><svg viewBox="0 0 26 26"><circle cx="13" cy="13" r="11.500" fill="#35a853"/><path d="M3 7.200A11.500 11.500 0 0 1 23 7.200H13L8 15.500Z" fill="#e94335"/><path d="M23 7.200A11.500 11.500 0 0 1 13 24.500L18 15.500L13 7.200Z" fill="#fbbc05"/><circle cx="13" cy="13" r="5.500" fill="#fff"/><circle cx="13" cy="13" r="4.300" fill="#4285f4"/></svg></div>
    <div class="run active"><svg viewBox="0 0 26 26"><path d="M1 1H25V25H1Z" fill="#fce8d8"/><path d="M8 3H19V8H13V11H18V15H13V21H8Z" fill="#db913f"/><path d="M8 3L12 6V20H8Z" fill="#9f5a1a"/><text x="18" y="24" class="tiny">360</text></svg></div>
  </div>
  <div class="tray">
    <svg width="128" height="40" viewBox="1086 728 128 40" fill="none" stroke="#fff" stroke-width="1.200"><path d="M1094 752L1099.500 746L1105 752"/><path d="M1119 752A4 4 0 0 1 1117 745Q1121 741 1125 745Q1129 745 1131 749Q1131 752 1128 752Z" fill="#ddd" stroke="none"/><path d="M1145 744.500H1153V752.500H1142V749M1154 746V751M1140 741V743M1144 741V743M1139 743H1145V746L1142 748L1139 746ZM1142 748V751"/><path d="M1147 746H1152V751H1147Z" fill="#fff" stroke="none"/><g stroke="#aab5b7"><path d="M1167 755Q1167 744 1178 743M1170 755Q1170 747 1178 746.500M1173 755Q1173 750 1178 750"/></g><circle cx="1176" cy="754" r="1.500" fill="#fff" stroke="none"/><path d="M1187 746H1190L1194 742V754L1190 750H1187ZM1196 746Q1198 748 1196 750M1198 744Q1201 748 1198 752M1200.500 742Q1204.500 748 1200.500 754"/></svg>
    <span class="lang">ESP</span>
    <div class="clock"><span>15:52</span><span>17-07-2020</span></div>
    <svg class="notif" width="34" height="40" viewBox="1320 728 34 40"><path d="M1325 740H1341V753H1332L1329 757V753H1325Z" fill="#fff"/><path d="M1328 743.500H1338M1328 746.500H1338M1328 749.500H1335" stroke="#23383b"/><circle cx="1341" cy="755" r="8.500" fill="#344346" stroke="#9aa5a7"/><text x="1341" y="759">10</text></svg>
  </div>
</footer>
<script src="grid.js"></script>
</body>
</html>
```

FILE: grid.js
```js
// Ground grid: 61 x 60 cells of 10 mm, with a heavier line every 50 mm.
const COLS = 61, ROWS = 60, OFFSET = 4;
let minor = '', major = '';
for (let v = 1; v < ROWS; v++) {
  const seg = `M0 ${v}H${COLS}`;
  if (v % 5 === OFFSET) major += seg; else minor += seg;
}
for (let u = 1; u < COLS; u++) {
  const seg = `M${u} 0V${ROWS}`;
  if (u % 5 === OFFSET) major += seg; else minor += seg;
}
document.getElementById('minor').setAttribute('d', minor);
document.getElementById('major').setAttribute('d', major);
```

FILE: styles.css
```css
*{box-sizing:border-box}
body{margin:0;width:1366px;height:768px;overflow:hidden;background:#fff;color:#333;font:11px "Liberation Sans",Arial,sans-serif;display:flex;flex-direction:column}
svg{display:block;flex:none}
.defs{position:absolute}
em,i{font-style:normal}
.dn{display:inline-block;border:3.500px solid transparent;border-top:5px solid #333;border-bottom:0;flex:none}
.titlebar{height:23px;display:flex;align-items:center;padding-left:2px;flex:none}
.apptitle{font:12px "Open Sans",sans-serif;color:#8b8b8b;margin-left:4px;letter-spacing:-.32px;white-space:nowrap}
.winbtns{margin-left:auto;margin-right:6px}
.tabbar{height:32px;flex:none;background:#cacaca;display:flex;align-items:center}
.doctab{width:936px;height:28px;align-self:flex-end;background:#f1f1f1;border-radius:4px 4px 0 0;display:flex;align-items:center;padding-left:427px;font:12px "Liberation Sans",sans-serif}
.doctab span{margin-left:4px;letter-spacing:.2px}
.tabx{margin-left:auto;margin-right:6px}
.newtab{width:28px;margin:0 6px 0 4px;height:28px;align-self:flex-end;background:#bababa;border-radius:4px 4px 0 0;display:grid;place-items:center}
.jobs{font-size:11px;width:12px;margin-left:2px}
.help{margin-left:17px}
.avatar{width:25px;height:25px;border-radius:50%;background:#f0f0f0;display:grid;place-items:center;margin-left:19px;color:#4a4a5a;font:11px Roboto,sans-serif}
.ribbon{height:82px;flex:none;background:#f1f1f1;border-bottom:1px solid #d4d4d4;display:flex;padding-left:11px;font-family:Roboto,sans-serif}
.workspace{width:111px;height:62px;margin-top:10px;border:2px solid #dcdcdc;border-radius:5px;display:flex;align-items:center;justify-content:center;font-size:11px;font-weight:bold;gap:5px;letter-spacing:-.1px}
.rtabs{display:flex;height:24px;margin-left:10px;font-size:11.500px}
.rtabs span{height:24px;line-height:23px;text-align:center;white-space:nowrap;letter-spacing:-.2px}
.rtabs span:nth-child(1){width:56px;margin-right:26px}
.rtabs span:nth-child(2){width:63px;margin-right:29px}
.rtabs span:nth-child(3){width:88px;margin-right:25px;letter-spacing:-.45px}
.rtabs span:nth-child(4){width:54px}
.rtabs span.on{color:#0a96da;border-bottom:3px solid #0a96da;font-weight:bold;letter-spacing:-.3px}
.groups{display:flex;height:57px}
.group{display:flex;flex-direction:column;align-items:center;position:relative;border-right:1px solid #d9d9d9;height:51px;margin-top:2px}
.icons{display:flex;height:36px;margin-top:-1px}
.icons svg{width:43px;height:36px}
.glabel{font-size:11px;line-height:13px;white-space:nowrap;letter-spacing:-.15px;margin-top:5px}
.glabel .dn{margin-left:4px;vertical-align:2px}
.create{width:267px}.modify{width:268px}.assemble{width:97px}.construct{width:99px}.inspect{width:79px}.insert{width:70px}.select{width:75px;border:0}
.viewport{height:543px;flex:none;position:relative;border-bottom:2px solid #cbcbcb;overflow:hidden}
.scene{display:block}
.minor,.major{fill:none;stroke:#e9e9e9;stroke-width:1;vector-effect:non-scaling-stroke}
.major{stroke:#c6c6c6;stroke-width:1.200}
.axis{font:14px "Liberation Sans",sans-serif;fill:#8c8c8c}
.rim path{fill:none;stroke:#0b0907;stroke-width:14}
.rimpink path{fill:none;stroke:#e9bde6;stroke-width:4.500;stroke-dasharray:34 2}
.panelhead{position:absolute;left:4px;width:300px;height:25px;background:#f1f1f1;border:1px solid #c9c9c9;border-top-color:#e5e5e5;border-bottom-width:2px;display:flex;align-items:center;padding-left:4px;font:11.500px Roboto,sans-serif;color:#555}
.panelhead span{margin-left:8px;letter-spacing:-.1px}
.end{margin-left:auto}
.browser{top:4px}
.comments{top:512px;padding-left:16px}
.tree{position:absolute;left:0;top:32px;margin:0;padding:0;list-style:none}
.tree li{height:24px;display:flex;align-items:center;padding-left:40px;gap:8px}
.tree .root{padding-left:20px;gap:7px}
.tree .opened{padding-left:38px;gap:7px}
.tree .leaf{padding-left:76px}
.node{height:20px;background:#f0f0f0;display:flex;align-items:center;padding-left:3px;gap:9px;position:relative;letter-spacing:-.13px}
.node em{margin-left:5px;white-space:nowrap}
.root .node{gap:6px}
.root .node>svg:last-child{margin-left:-2px}
.sel{width:98px;height:16px;background:#999;color:#fff;display:flex;align-items:center;padding-left:2px;gap:8px;letter-spacing:.3px}
.w148{width:148px}.w134{width:134px}.w110{width:110px}.w95{width:95px}.w111{width:111px}.w103{width:103px}.w99{width:99px}.w115{width:115px}.w131{width:131px}
.hatch::after{content:"";position:absolute;left:26px;right:3px;bottom:2px;height:4px;background:repeating-linear-gradient(135deg,#7489b5 0 1.600px,transparent 1.600px 4.240px)}
.cube{position:absolute;left:1280px;top:5px}
.snap{position:absolute;left:952px;top:164px;width:101px;height:15px;border:1px solid #666;background:#f1f1f1;font:11px "DejaVu Sans",sans-serif;letter-spacing:-.42px;line-height:13px;text-align:center;color:#000;white-space:nowrap}
.floatinput{position:absolute;left:823px;top:287px;width:104px;height:22px;background:#f0f0f0;display:flex;align-items:center}
.grip{width:4px;height:16px;margin-left:5px;background:radial-gradient(circle,#ccc 1px,transparent 1px) 0 0/3px 3px}
.fbox{width:66px;height:17px;border:1px solid #c4c4c4;background:#fff;margin:0 5px 0 15px;padding:0 0 0 6px;line-height:14px;white-space:nowrap;font-size:12px;letter-spacing:-.75px}
.fbox mark{background:#0078d7;color:#fff;border-right:1px solid #000;display:inline-block;height:14px}
.dialog{position:absolute;left:1112px;top:95px;width:250px;height:243px;background:#f1f1f1;border:1px solid #c9c9c9}
.dhead{height:24px;border-bottom:1px solid #c9c9c9;display:flex;align-items:center;padding:0 4px 0 0;font:11.500px Roboto,sans-serif;color:#555}
.dhead span{margin-left:4px;letter-spacing:-.3px}
.drow{height:30px;display:flex;align-items:center;padding-left:12px}
.drow label{width:87px;letter-spacing:.05px}
.pick{width:78px;height:27px;border:1px solid #ddd;background:#fff;display:flex;align-items:center;gap:3px;padding-left:5px;white-space:nowrap}
.clr{margin-left:11px}
.inp{width:115px;height:21px;border:1px solid #bcbcbc;background:#fff;margin-left:7px;padding-left:2px;line-height:18px;margin-top:-1px;letter-spacing:-.15px}
.drow>.dn{margin-left:2px}
.combo{width:135px;height:27px;border:1px solid #ddd;background:#fff;display:flex;align-items:center;justify-content:space-between;padding:0 4px 0 6px;letter-spacing:-.25px}
.chk{margin-left:5px}
.dfoot{height:38px;border-top:1px solid #c9c9c9;display:flex;align-items:center;padding-left:8px;margin-top:1px}
.dfoot button{width:60px;height:19px;border:1px solid #aaa;background:#e8e8e8;color:#666;font:12px "Liberation Sans",sans-serif;padding:0;margin-left:10px}
.dfoot svg+button{margin-left:87px}
.navbar{position:absolute;left:556px;top:513px;width:253px;height:24px;background:#f1f1f1;display:flex}
.status{position:absolute;right:35px;top:519px;font-weight:bold;line-height:13px}
.timeline{height:48px;flex:none;background:#f1f1f1;display:flex}
.feats{width:402px;padding-top:14px}
.ftrow{display:flex;padding-left:3px;height:18px}
.ftrow svg{width:18px;height:18px;margin-right:6px;overflow:visible}
.marker{margin-top:8px;margin-left:-1px}
.cog{margin:16px 13px 0 auto}
.taskbar{height:40px;flex:none;display:flex;background:linear-gradient(90deg,#4b222f 0,#4a2027 392px,#43291f 490px,#42291f 680px,#48231e 820px,#3b1d1e 950px,#252320 1030px,#1a2929 1080px,#213a3e 1180px,#24393c 1366px)}
.start{width:48px;display:grid;place-items:center}
.search{width:344px;background:#f2f2f2;border:1px solid #bbb;display:flex;align-items:center;padding-left:11px;font:14px "Open Sans",sans-serif;color:#333}
.search span{margin-left:10px;letter-spacing:.02px}
.apps{display:flex}
.apps div{width:49.100px;height:40px;display:grid;place-items:center}
.apps svg{width:26px;height:26px}
.apps text{font:bold 11px "Open Sans",sans-serif;fill:#fff;text-anchor:middle}
.apps text.tiny{font-size:5px;fill:#d97f2e}
.apps .run{background:linear-gradient(#76b9ed,#76b9ed) center bottom/40px 2px no-repeat}
.apps .active{width:48px;background:linear-gradient(#76b9ed,#76b9ed) bottom/100% 2px no-repeat,#544b49}
.tray{margin-left:auto;display:flex;align-items:center;color:#fff;font:12px "Open Sans",sans-serif}
.lang{width:22px;letter-spacing:-.5px;text-align:center}
.clock{width:74px;margin-left:5px;display:flex;flex-direction:column;align-items:center;line-height:18px;letter-spacing:-.4px}
.notif{margin:0 12px 0 5px}
.notif text{font:11px "Open Sans",sans-serif;fill:#fff;text-anchor:middle}
```
